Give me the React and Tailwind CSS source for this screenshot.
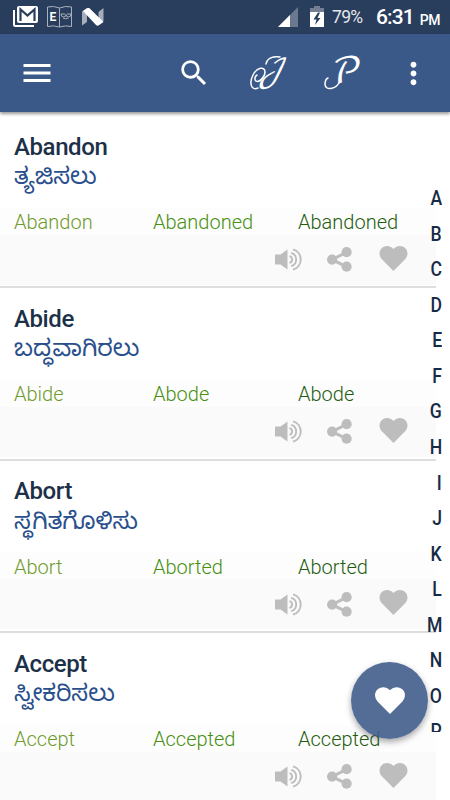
import React, { useState } from 'react';
import { MdSearch, MdMenu, MdMoreVert } from 'react-icons/md';

const WORDS = [
  { word: 'Abandon', meaning: 'ತ್ಯಜಿಸಲು', forms: ['Abandon', 'Abandoned', 'Abandoned'] },
  { word: 'Abide', meaning: 'ಬದ್ಧವಾಗಿರಲು', forms: ['Abide', 'Abode', 'Abode'] },
  { word: 'Abort', meaning: 'ಸ್ಥಗಿತಗೊಳಿಸು', forms: ['Abort', 'Aborted', 'Aborted'] },
  { word: 'Accept', meaning: 'ಸ್ವೀಕರಿಸಲು', forms: ['Accept', 'Accepted', 'Accepted'] },
];

const LETTERS = 'ABCDEFGHIJKLMNOP'.split('');

const HeartIcon = ({ className }) => (
  <svg className={className} viewBox="0 0 28 25" fill="currentColor">
    <path d="M14 25 2.6 13.6C-.6 10.4-.8 5.200 2 2.400 5.200-.8 10.600-.8 14 3c3.400-3.800 8.800-3.800 12-.6 2.800 2.800 2.600 8-.6 11.200z" />
  </svg>
);

const ShareIcon = () => (
  <svg className="w-[25px] h-[25px]" viewBox="0 0 25 25" fill="currentColor">
    <path d="M19.500 5.300 5 12.600l14.500 7" fill="none" stroke="currentColor" strokeWidth="3" />
    <circle cx="19.600" cy="5.200" r="5.100" />
    <circle cx="5.100" cy="12.600" r="5.100" />
    <circle cx="19.600" cy="19.700" r="5.100" />
  </svg>
);

const SpeakerIcon = () => (
  <svg className="w-[27px] h-[23px]" viewBox="0 0 27 23" fill="none" stroke="currentColor" strokeWidth="1.9">
    <path d="M0 6.500h5.500L12.500 1.500v20l-7-5H0z" fill="currentColor" stroke="none" />
    <path d="M14.500 8.200a3.400 3.400 0 0 1 0 6.600M16.200 4.800a7 7 0 0 1 0 13.400M18 1.300a10.600 10.600 0 0 1 0 20.400" />
  </svg>
);

const StatusBar = () => (
  <div className="h-[34px] bg-[#293d5d] flex items-center justify-between pl-[13px] pr-[10px] text-white">
    <div className="flex items-center gap-[9px]">
      <svg className="w-[25px] h-[22px]" viewBox="0 0 25 22" fill="none">
        <path d="M1 4v14.500q0 1.500 1.500 1.500H21" stroke="#fff" strokeWidth="2" />
        <rect x="4" y="0" width="21" height="17" rx="2" fill="#fff" />
        <path d="M7.500 15V3.500l7 6 7-6V15" stroke="#293d5d" strokeWidth="2.200" />
      </svg>
      <svg className="w-[25px] h-[22px]" viewBox="0 0 25 22" fill="none" stroke="#a9b1bf">
        <path d="M.5 1q6-1.500 12 1 6-2.500 12-1v19.500q-6-1.500-12 .5-6-2-12-.5zM12.500 2v19" />
        <text x="2.500" y="15" fontSize="12" fontWeight="700" fill="#fff" stroke="none" fontFamily="Roboto, sans-serif">E</text>
        <path d="M14 8q0 3 2.500 3t2.500-2.500Q19 11 21.500 11T24 8M14 8h4m2 0h4m-8 4q2.500 1.500 5.500 0" />
      </svg>
      <svg className="w-[22px] h-[18px] ml-px" viewBox="0 0 22 18">
        <path d="M0 3.500 5 0v14L0 17.500zM16.500 4 21.500 0v13l-5 4z" fill="#a6aebb" />
        <path d="M1 3 5.500 0Q7-.5 8 .7L21.500 14 16 17.800Q15 18 14 17z" fill="#fff" />
      </svg>
    </div>
    <div className="flex items-center font-[Roboto,sans-serif]">
      <svg className="w-5 h-5" viewBox="0 0 20 20">
        <path d="M0 20 20 0v20z" fill="#6b7990" />
        <path d="M0 20 12 8v12z" fill="#fff" />
      </svg>
      <svg className="w-[14px] h-[21px] -mt-px ml-3" viewBox="0 0 14 21">
        <path d="M0 2h4V0h6v2h4v5H0z" fill="#737f94" />
        <path d="M0 6h14v15H0z" fill="#fff" />
        <path d="M8 6.500 3.500 13.500h3L5 19l5.500-7h-3L10 6.500z" fill="#293d5d" />
      </svg>
      <span className="ml-[8px] w-[44px] pt-px text-[17.500px] leading-none tracking-[-0.7px] text-gray-200">79%</span>
      <span className="pt-px text-[21px] leading-none font-medium tracking-[-0.9px]">6:31</span>
      <span className="ml-[6px] pt-[5px] text-[14px] leading-none font-medium tracking-[-0.5px]">PM</span>
    </div>
  </div>
);

// Script initials with a pen flourish on the left
const ScriptInitial = ({ glyph, flourish, transform, size }) => (
  <svg className="w-[36px] h-[36px] overflow-visible" viewBox="0 0 36 36" fill="none" stroke="#fff" strokeLinecap="round">
    <text transform={transform} fontSize={size} fill="#fff" stroke="none" fontFamily="'DejaVu Math TeX Gyre', serif">{glyph}</text>
    <path d={flourish} strokeWidth="1.500" />
  </svg>
);

const AppBar = () => (
  <header className="relative z-10 h-[78px] bg-[#3b5988] text-white shadow-[0_2px_3px_rgba(0,0,0,0.4)] flex items-center">
    <button className="ml-[19px]"><MdMenu className="w-9 h-9" /></button>
    <button className="ml-[122px]"><MdSearch className="w-[34px] h-[34px]" /></button>
    <button className="ml-[38px]">
      <ScriptInitial glyph="𝒥" transform="translate(9 26) skewX(-14)" size="31" flourish="M9 33C2 36 0 28 4 20c4-8 12-9 12-3 0 5-6 11-9 9-2-1-1-5 1-6M17 9c1-6 7-8 14-7" />
    </button>
    <button className="ml-[38px]">
      <ScriptInitial glyph="𝒫" transform="translate(8 28) skewX(-3)" size="36" flourish="M17 26c-4 9-15 10-15 3 0-3 1-5 3-6" />
    </button>
    <button className="ml-[37px]"><MdMoreVert className="w-[35px] h-[35px]" /></button>
  </header>
);

const WordRow = ({ item, liked, onLike }) => (
  <div className="h-[172.400px] shrink-0 flex flex-col border-b-2 border-[#dedede] bg-white">
    <div className="h-[91.500px] pl-[14px] pt-[14.500px]">
      <h2 className="text-[24px] leading-8 font-medium tracking-[-0.4px] text-[#1c3148]">{item.word}</h2>
      <p className="mt-[4.500px] text-[23.700px] leading-7 text-[#2a4f8c] font-['Noto_Sans_Kannada','Noto_Sans',sans-serif]">{item.meaning}</p>
    </div>
    <div className="h-[27px] pl-[14px] pt-[2px] flex items-center bg-[#fdfdfd] text-[20px] font-light">
      <span className="w-[139px] text-[#6f9a2c]">{item.forms[0]}</span>
      <span className="w-[145px] text-[#459010]">{item.forms[1]}</span>
      <span className="text-[#1f5c10]">{item.forms[2]}</span>
    </div>
    <div className="h-[50px] bg-[#fafafa] flex items-center justify-end pr-[28px] text-[#bdbdbd]">
      <SpeakerIcon />
      <span className="ml-[25px]"><ShareIcon /></span>
      <button className={liked ? 'ml-[27px] text-[#3b5988]' : 'ml-[27px]'} onClick={onLike}>
        <HeartIcon className="w-[29px] h-[25px] -mt-[3px]" />
      </button>
    </div>
  </div>
);

export default function App() {
  const [liked, setLiked] = useState([]);

  const toggleLike = (word) => setLiked(liked.includes(word) ? liked.filter(w => w !== word) : [...liked, word]);

  return (
    <div className="relative w-[450px] h-[800px] overflow-hidden bg-white flex flex-col font-[Roboto,sans-serif]">
      <StatusBar />
      <AppBar />
      <div className="flex-1 min-h-0 flex">
        <main className="w-[436px] pt-[4px] overflow-hidden flex flex-col">
          {WORDS.map(item => (
            <WordRow key={item.word} item={item} liked={liked.includes(item.word)} onLike={() => toggleLike(item.word)} />
          ))}
        </main>
      </div>

      {/* Alphabet index */}
      <nav className="absolute right-[8px] top-[181px] h-[551px] overflow-hidden flex flex-col items-end text-[20px] font-medium text-[#172b47]">
        {LETTERS.map(l => (
          <span key={l} className="h-[35.570px] shrink-0 leading-[35.570px] origin-right scale-x-88">{l}</span>
        ))}
      </nav>

      <button className="absolute left-[351px] top-[662px] w-[77px] h-[77px] rounded-full bg-[#3b5988]/88 text-white flex items-center justify-center shadow-[0_3px_6px_rgba(0,0,0,0.35)]">
        <HeartIcon className="w-[30px] h-[27px]" />
      </button>
    </div>
  );
}
